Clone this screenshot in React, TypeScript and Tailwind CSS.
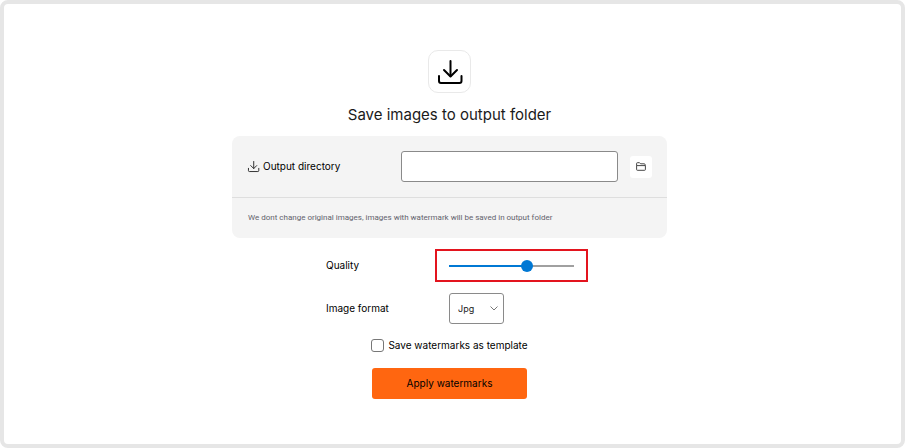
import { useState, type FormEvent } from "react";

const RANGE_CLASSES =
  "block h-3 w-full cursor-pointer appearance-none bg-transparent outline-none " +
  "[&::-webkit-slider-thumb]:size-3 [&::-webkit-slider-thumb]:appearance-none " +
  "[&::-webkit-slider-thumb]:rounded-full [&::-webkit-slider-thumb]:bg-[#0078d4]";

function DownloadIcon({ className }: { className: string }) {
  return (
    <svg
      viewBox="0 0 24 24"
      fill="none"
      stroke="currentColor"
      strokeWidth="2"
      strokeLinecap="round"
      strokeLinejoin="round"
      className={className}
      aria-hidden="true"
    >
      <path d="M12.500 1v15" />
      <path d="m6 10 6.500 6.500L19 10" />
      <path d="M1 16v5a2 2 0 0 0 2 2h18.500a2 2 0 0 0 2-2v-5" />
    </svg>
  );
}

function FolderIcon() {
  return (
    <svg
      viewBox="0 0 10 9"
      fill="none"
      stroke="currentColor"
      strokeWidth="0.9"
      strokeLinejoin="round"
      className="h-[9px] w-[10px]"
      aria-hidden="true"
    >
      <path d="M.6 3.600V1.500a.8.8 0 0 1 .8-.8h2.100l1.100 1.100h3.700a.8.8 0 0 1 .8.8v1" />
      <path d="M.6 3.600h8.800v3.900a.8.8 0 0 1-.8.800H1.400a.8.8 0 0 1-.8-.8z" />
    </svg>
  );
}

export default function App() {
  const [directory, setDirectory] = useState("");
  const [quality, setQuality] = useState(64);
  const [format, setFormat] = useState("jpg");
  const [saveTemplate, setSaveTemplate] = useState(false);

  const handleSubmit = (e: FormEvent) => {
    e.preventDefault();
  };

  return (
    <div className="min-h-screen bg-white flex font-['Inter',sans-serif] text-[10px] leading-[15px] text-black">
      <main className="flex-1 rounded-lg border-4 border-[#e6e6e6] bg-white pt-[46px] pr-1.5 pb-10">
        <form onSubmit={handleSubmit} className="mx-auto flex w-full max-w-[435px] flex-col items-center">
          <div className="flex size-[43px] items-center justify-center rounded-[10px] border border-[#e9e9e9]">
            <DownloadIcon className="size-6 overflow-visible" />
          </div>
          <h1 className="mt-3 text-[15px] leading-5 text-[#1a1a1a]">Save images to output folder</h1>

          <section className="mt-[11px] w-full rounded-lg bg-[#f4f4f4]">
            <div className="flex items-center border-b border-[#dedede] py-[15px] pr-[15px] pl-4">
              <label htmlFor="directory" className="flex flex-1 items-center gap-1">
                <DownloadIcon className="size-[11px] overflow-visible text-[#222]" />
                Output directory
              </label>
              <input
                id="directory"
                type="text"
                value={directory}
                onChange={(e) => setDirectory(e.target.value)}
                className="h-[31px] w-[217px] rounded-[3px] border border-[#8a8a8a] bg-white px-2 outline-none"
              />
              <button
                type="button"
                aria-label="Choose folder"
                className="ml-3 flex size-[22px] items-center justify-center rounded-[3px] bg-white text-[#333]"
              >
                <FolderIcon />
              </button>
            </div>
            <p className="px-4 py-3 font-['Roboto',sans-serif] text-[8px] leading-4 text-[#62626c]">
              We dont change original images, images with watermark will be saved in output folder
            </p>
          </section>

          <div className="mt-[11px] ml-[15px] grid grid-cols-[109px_153px] items-center gap-y-[11px]">
            <label htmlFor="quality">Quality</label>
            <div className="flex h-[33px] items-center border-2 border-[#e3141e] px-3">
              <div className="relative w-full">
                <div className="absolute inset-x-0 top-[5px] flex h-0.5 bg-[#a0a0a0]">
                  <div className="bg-[#0078d4]" style={{ width: `${quality}%` }} />
                </div>
                <input
                  id="quality"
                  type="range"
                  min={0}
                  max={100}
                  value={quality}
                  onChange={(e) => setQuality(Number(e.target.value))}
                  className={`relative ${RANGE_CLASSES}`}
                />
              </div>
            </div>

            <label htmlFor="format">Image format</label>
            <div className="relative ml-[14px] w-[55px]">
              <select
                id="format"
                value={format}
                onChange={(e) => setFormat(e.target.value)}
                className="block h-[31px] w-full appearance-none rounded-[3px] border border-[#8a8a8a] bg-white pl-2 text-[9px] text-[#222] outline-none"
              >
                <option value="jpg">Jpg</option>
                <option value="png">Png</option>
              </select>
              <svg
                viewBox="0 0 8 5"
                fill="none"
                stroke="#555"
                strokeWidth="0.8"
                className="pointer-events-none absolute top-[13px] right-1.5 h-[5px] w-2"
                aria-hidden="true"
              >
                <path d="m.5.5 3.500 3.500L7.500.5" />
              </svg>
            </div>
          </div>

          <label className="mt-[14px] flex items-center gap-1">
            <input
              type="checkbox"
              checked={saveTemplate}
              onChange={(e) => setSaveTemplate(e.target.checked)}
              className="size-[13px] appearance-none rounded-[3px] border border-[#777] bg-white checked:bg-[#0078d4]"
            />
            Save watermarks as template
          </label>

          <button
            type="submit"
            className="mt-[15px] h-[31px] w-[155px] rounded-[3px] bg-[#ff6610] text-black"
          >
            Apply watermarks
          </button>
        </form>
      </main>
    </div>
  );
}
